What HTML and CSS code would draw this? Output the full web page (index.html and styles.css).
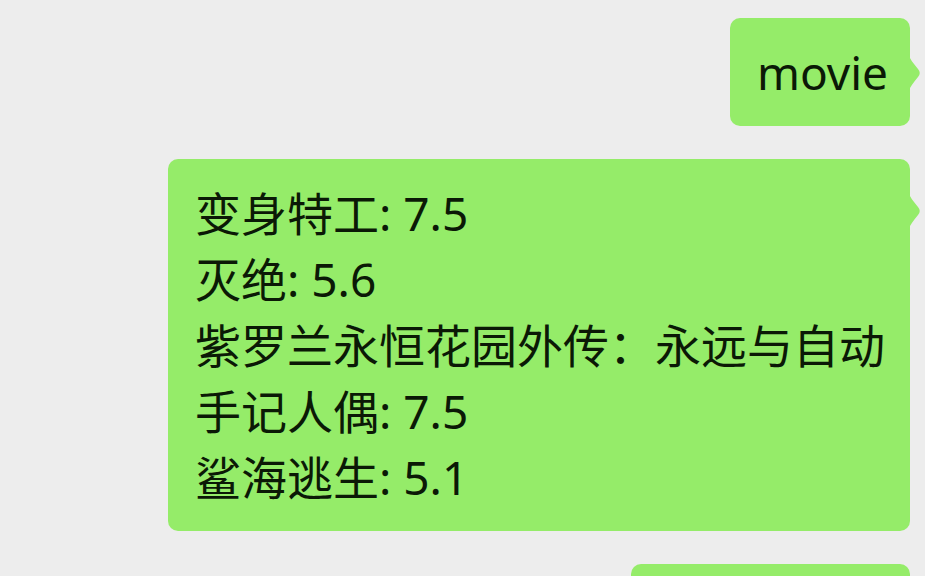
FILE: index.html
```html
<!DOCTYPE html>
<html lang="zh">
<head>
<meta charset="utf-8">
<link rel="stylesheet" href="styles.css">
</head>
<body>
<div class="chat">
  <div class="bubble bubble-short">
    <p class="text">movie</p>
    <svg class="tail" viewBox="0 0 14 38" width="14" height="38"><path d="M0 0 C2 5 5 9 10 15 Q13.5 19 10 23 C5 29 2 33 0 38 Z"/></svg>
  </div>
  <div class="bubble bubble-list">
    <p class="text">变身特工: 7.5<br>灭绝: 5.6<br>紫罗兰永恒花园外传：永远与自动手记人偶: 7.5<br>鲨海逃生: 5.1</p>
    <svg class="tail" viewBox="0 0 14 38" width="14" height="38"><path d="M0 0 C2 5 5 9 10 15 Q13.5 19 10 23 C5 29 2 33 0 38 Z"/></svg>
  </div>
  <div class="bubble bubble-next">
    <p class="text">&nbsp;</p>
  </div>
</div>
</body>
</html>
```
FILE: styles.css
```css
html, body {
  margin: 0;
  padding: 0;
  background: #ededed;
  overflow: hidden;
}
.chat {
  display: flex;
  flex-direction: column;
  align-items: flex-end;
  gap: 33px;
  padding: 18px 15px 0 15px;
  font-family: "Noto Sans", "Noto Sans CJK SC", sans-serif;
  font-size: 46px;
  line-height: 66px;
  color: #0b1906;
}
.bubble {
  position: relative;
  background: #95ec69;
  border-radius: 10px;
  box-sizing: border-box;
  max-width: 742px;
  padding: 21px 22px 21px 27px;
}
.bubble-list {
  width: 742px;
}
.bubble-next {
  width: 279px;
}
.text {
  margin: 0;
}
.tail {
  position: absolute;
  right: -12px;
  top: 36px;
  fill: #95ec69;
}
.bubble-list .tail {
  top: 33px;
}
```
